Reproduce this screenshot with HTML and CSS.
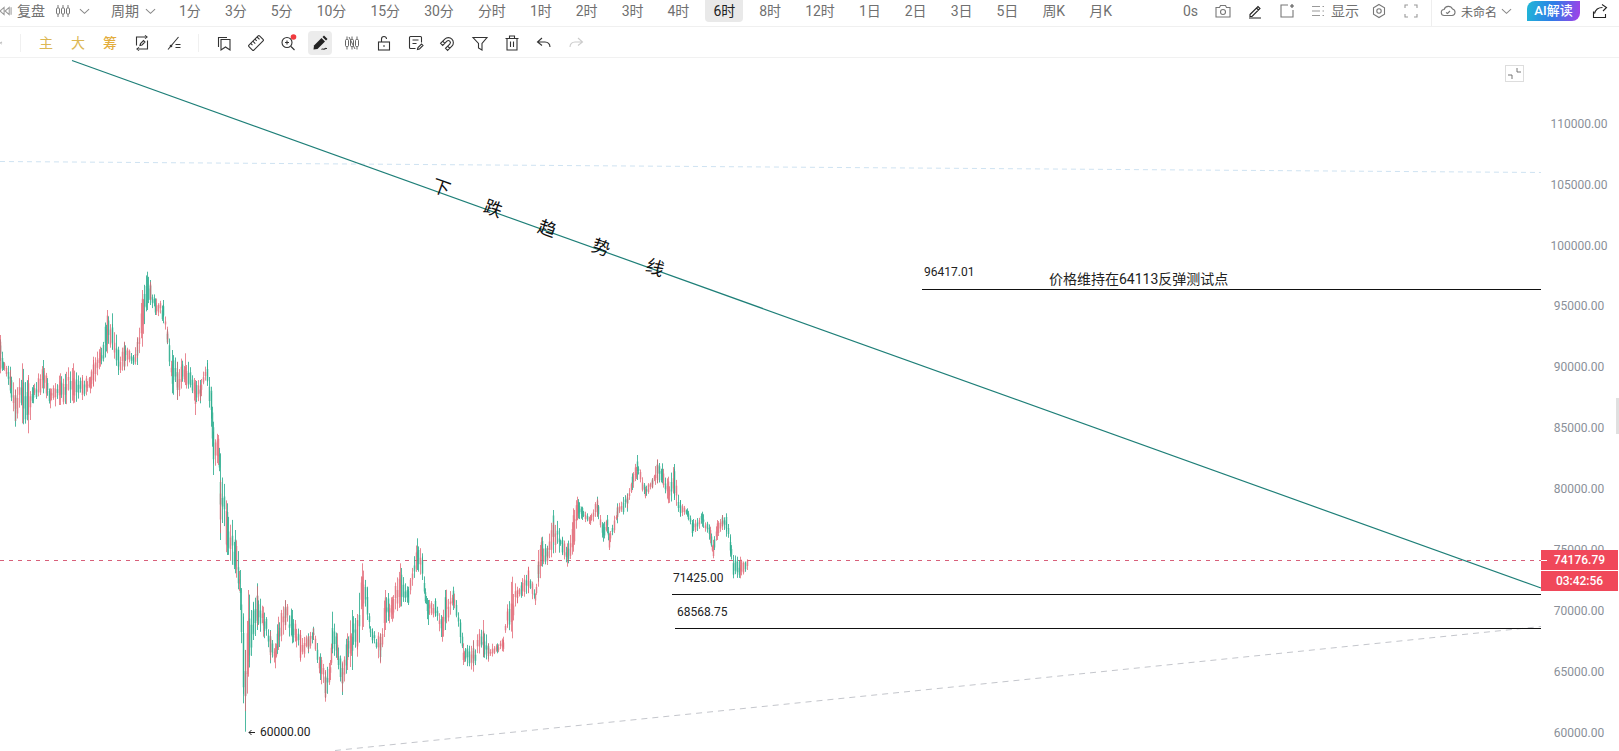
FILE: index.html
```html
<!DOCTYPE html>
<html lang="zh">
<head>
<meta charset="utf-8">
<title>BTC 6时</title>
<link rel="stylesheet" href="styles.css">
</head>
<body>
<div class="app">
  <header class="topbar">
    <svg class="ic replay" viewBox="0 0 14 16"><path d="M5.500 4 1 8l4.500 4zM11 4 6.500 8l4.500 4zM13 4v8"/></svg>
    <span class="label replay-label">复盘</span>
    <svg class="ic kline" viewBox="0 0 16 16"><path d="M3 2v3M3 11v3M8 2v3M8 11v3M13 2v3M13 11v3"/><rect x="1.500" y="5" width="3" height="6" rx="1"/><rect x="6.500" y="5" width="3" height="6" rx="1"/><rect x="11.500" y="5" width="3" height="6" rx="1"/></svg>
    <svg class="ic chev kline-chev" viewBox="0 0 12 12"><path d="M1 3.500 6 8l5-4.500"/></svg>
    <span class="label cycle">周期</span>
    <svg class="ic chev cycle-chev" viewBox="0 0 12 12"><path d="M1 3.500 6 8l5-4.500"/></svg>
    <nav class="periods">
      <span class="period">1分</span><span class="period">3分</span><span class="period">5分</span><span class="period">10分</span><span class="period">15分</span><span class="period">30分</span><span class="period">分时</span><span class="period">1时</span><span class="period">2时</span><span class="period">3时</span><span class="period">4时</span><span class="period active">6时</span><span class="period">8时</span><span class="period">12时</span><span class="period">1日</span><span class="period">2日</span><span class="period">3日</span><span class="period">5日</span><span class="period">周K</span><span class="period">月K</span>
    </nav>
    <div class="actions">
      <span class="label seconds">0s</span>
      <span class="cell"><svg class="ic" viewBox="0 0 16 16"><path d="M1 4.500h3.500l1-2h5l1 2H15v9.500H1z"/><circle cx="8" cy="9" r="2.500"/></svg></span>
      <span class="cell"><svg class="ic dark" viewBox="0 0 16 16"><path d="M3 11.500 11 3.500l2 2-8 8H3zM9.500 5l2 2M2 15h12"/></svg></span>
      <span class="cell"><svg class="ic" viewBox="0 0 16 16"><path d="M9 2H2v12h12V7"/><path class="dot" d="M13 1v4M11 3h4"/></svg></span>
      <span class="show-group">
        <svg class="ic light" viewBox="0 0 16 16"><path d="M2 3.500h8M2 8h8M2 12.500h8M12.500 3.500H14M12.500 8H14M12.500 12.500H14"/></svg>
        <span class="label">显示</span>
      </span>
      <span class="cell"><svg class="ic" viewBox="0 0 16 16"><path d="M8 1.500l5.500 3.200v6.600L8 14.500l-5.500-3.200V4.700z"/><circle cx="8" cy="8" r="2.200"/></svg></span>
      <span class="cell"><svg class="ic light" viewBox="0 0 16 16"><path d="M2 5V2h3M11 2h3v3M14 11v3h-3M5 14H2v-3"/></svg></span>
    </div>
    <div class="doc">
      <svg class="ic" viewBox="0 0 16 16"><path d="M4.500 12.500a3 3 0 0 1-.4-6A4.500 4.500 0 0 1 12.500 6a3.300 3.300 0 0 1-.5 6.500zM6 9.500l1.500 1L10 8"/></svg>
      <span class="doc-name">未命名</span>
      <svg class="ic chev" viewBox="0 0 12 12"><path d="M1 3.500 6 8l5-4.500"/></svg>
    </div>
    <button class="ai">AI解读</button>
    <svg class="ic dark share" viewBox="0 0 16 16"><path d="M1.500 8.500v6h12V11M2.500 10.500C3.500 6.500 6 4.500 10.500 4.500M10 1.500l4.500 3L11 8"/></svg>
  </header>

  <div class="toolbar">
    <span class="edge"><svg class="ic edge-mark" viewBox="0 0 4 16"><path d="M2 7 0 8l2 1"/></svg></span>
    <span class="cell gold">主</span>
    <span class="cell gold">大</span>
    <span class="cell gold strong">筹</span>
    <span class="cell"><svg class="ic tool" viewBox="0 0 16 16"><path d="M11 2H2.500v8.500M5 14h8.500V5.500M11 .5 13 2l-2 1.500M5 12.500 3 14l2 1.500"/><path d="M6 10.500l.5-2 3-3L11 7l-3 3z"/></svg></span>
    <span class="cell"><svg class="ic tool" viewBox="0 0 16 16"><path d="M2 14.500 12.500 2M9.500 9.500h5M9.500 12.500h5"/><circle cx="5" cy="11" r=".8"/></svg></span>
    <span class="rule"></span>
    <span class="cell"><svg class="ic tool" viewBox="0 0 16 16"><path d="M2.500 12V2.500H11"/><path d="M5 4.500h9V15l-4.500-3L5 15z"/></svg></span>
    <span class="cell"><svg class="ic tool" viewBox="0 0 16 16"><g transform="rotate(-45 8 8)"><rect x="0.500" y="4.500" width="15" height="7" rx="1"/><path d="M4 4.500V7M7 4.500V8M10 4.500V7M13 4.500V8"/></g></svg></span>
    <span class="cell"><svg class="ic tool" viewBox="0 0 16 16"><circle cx="7" cy="7.500" r="5"/><path d="M11 11.500l3.500 3.500M7 5.500v4M5 7.500h4"/><circle class="red-dot" cx="13.500" cy="2" r="2.800"/></svg></span>
    <span class="cell"><span class="active-tool"><svg class="ic tool" viewBox="0 0 16 16"><path class="fill" d="M2 10.500 9.500 3l3.500 3.500L5.500 14 1.500 14.500z"/><path class="fill" d="M10.500 2 12 .5 15.500 4 14 5.500z"/><path d="M9.500 14.500c1-1.500 2 .5 3-.5s1.500-.5 2.500-.5"/></svg></span></span>
    <span class="cell"><svg class="ic tool thin" viewBox="0 0 16 16"><path d="M3 1.500v3M3 11.500v3M8 1.500v3M8 11.500v3M13 1.500v3M13 11.500v3"/><rect x="1.500" y="4.500" width="3" height="7" rx="1"/><rect x="6.500" y="4.500" width="3" height="7" rx="1"/><rect x="11.500" y="4.500" width="3" height="7" rx="1"/><path d="M5 2l6 12"/></svg></span>
    <span class="cell"><svg class="ic tool" viewBox="0 0 16 16"><rect x="2.500" y="7" width="11" height="8"/><path d="M5.500 7V4a2.500 2.500 0 0 1 5 0M7 11h2"/></svg></span>
    <span class="cell"><svg class="ic tool" viewBox="0 0 16 16"><path d="M13.500 7.500V2.500a1 1 0 0 0-1-1h-10a1 1 0 0 0-1 1v10a1 1 0 0 0 1 1h5M4.500 5h6M4.500 8.500h4"/><path d="M9.500 14.500l.5-2 3.500-3.500 1.500 1.500-3.500 3.500z"/></svg></span>
    <span class="cell"><svg class="ic tool" viewBox="0 0 16 16"><g transform="rotate(-135 8 8)"><path d="M3 2.500V8.500a5 5 0 0 0 10 0V2.500h-3v6a2 2 0 0 1-4 0v-6zM3 5.500h3M10 5.500h3"/></g></svg></span>
    <span class="cell"><svg class="ic tool" viewBox="0 0 16 16"><path d="M1 2.500h14L10 8.500V15L6.500 13V8.500z"/></svg></span>
    <span class="cell"><svg class="ic tool" viewBox="0 0 16 16"><path d="M1.500 3.500h13M5.500 3.500V1h5v2.500M3 3.500v11.500h10V3.500M6.500 6.500v5.500M9.500 6.500v5.500"/></svg></span>
    <span class="cell"><svg class="ic tool" viewBox="0 0 16 16"><path d="M6 3 1.500 7 6 10.500M2 7h7c3 0 5 2 5 5"/></svg></span>
    <span class="cell"><svg class="ic tool disabled" viewBox="0 0 16 16"><path d="M10 3l4.500 4L10 10.500M14 7H7c-3 0-5 2-5 5"/></svg></span>
  </div>

  <main class="chart">
    <svg class="plot" viewBox="0 58 1619 693">
      <line class="dash-blue" x1="0" y1="161.500" x2="1541" y2="172.500"/>
      <line class="dash-gray" x1="335" y1="750.500" x2="1541" y2="626.500"/>
      <line class="dash-price" x1="0" y1="560.500" x2="1541" y2="560.500"/>
      <g id="candles"></g>
      <line class="trend" x1="72" y1="60.500" x2="1541" y2="588"/>
      <line class="level" x1="922" y1="289.500" x2="1541" y2="289.500"/>
      <line class="level" x1="672" y1="594.500" x2="1541" y2="594.500"/>
      <line class="level" x1="675" y1="628.500" x2="1541" y2="628.500"/>

      <text class="on-line" transform="translate(441 188) rotate(20)" y="6">下</text>
      <text class="on-line" transform="translate(493 209) rotate(20)" y="6">跌</text>
      <text class="on-line" transform="translate(547 229) rotate(20)" y="6">趋</text>
      <text class="on-line" transform="translate(601 248) rotate(20)" y="6">势</text>
      <text class="on-line" transform="translate(655 268) rotate(20)" y="6">线</text>

      <text class="mark" x="924" y="276">96417.01</text>
      <text class="note" x="1049" y="284">价格维持在64113反弹测试点</text>
      <text class="mark" x="673" y="582">71425.00</text>
      <text class="mark" x="677" y="616">68568.75</text>
      <path class="low-arrow" d="M255 732.500h-6M251.500 730l-2.500 2.500 2.500 2.500"/>
      <text class="mark" x="260" y="736">60000.00</text>

      <text class="axis" x="1579" y="127.500">110000.00</text>
      <text class="axis" x="1579" y="188.500">105000.00</text>
      <text class="axis" x="1579" y="249.500">100000.00</text>
      <text class="axis" x="1579" y="310">95000.00</text>
      <text class="axis" x="1579" y="371">90000.00</text>
      <text class="axis" x="1579" y="432">85000.00</text>
      <text class="axis" x="1579" y="493">80000.00</text>
      <text class="axis" x="1579" y="554">75000.00</text>
      <text class="axis" x="1579" y="615">70000.00</text>
      <text class="axis" x="1579" y="676">65000.00</text>
      <text class="axis" x="1579" y="736.500">60000.00</text>
    </svg>
    <span class="compress"><svg class="ic tool" viewBox="0 0 17 15"><path d="M11 2v4h4M2 9h4v4"/></svg></span>
    <span class="tag price">74176.79</span>
    <span class="tag timer">03:42:56</span>
    <span class="handle"></span>
  </main>
</div>
<script src="chart.js"></script>
</body>
</html>
```

FILE: styles.css
```css
* { box-sizing: border-box; }
html, body { margin: 0; height: 100%; background: #fff; overflow: hidden; }
body { font-family: Roboto, "Noto Sans CJK SC", sans-serif; color: #707070; }

.app { display: flex; flex-direction: column; width: 100%; height: 100vh; }

.ic { display: block; width: 16px; height: 16px; flex: none; fill: none; stroke: #777; stroke-width: 1.1; overflow: visible; }
.ic.dark { stroke: #222; }
.ic.light { stroke: #999; }
.ic.tool { stroke: #333; }
.ic.thin { stroke-width: .9; stroke: #555; }
.ic.disabled { stroke: #ccc; }
.ic .fill { fill: #222; stroke: none; }
.ic .dot { stroke: #555; }
.ic .red-dot { fill: #f03a3f; stroke: none; }

.topbar { display: flex; align-items: flex-start; height: 27px; border-bottom: 1px solid #f0f0f0; }
.topbar > .ic, .topbar > .label { margin-top: 3px; }
.label { font-size: 14px; line-height: 16px; color: #707070; white-space: nowrap; }
.replay { width: 13px; margin-left: -1px; stroke: #999; }
.replay-label { margin-left: 5px; }
.kline { margin-left: 10px; stroke: #777; stroke-width: 1; }
.chev { width: 11px; height: 11px; }
.topbar > .chev { margin-top: 6px; stroke: #888; }
.kline-chev { margin-left: 8px; }
.cycle { margin-left: 21px; }
.cycle-chev { margin-left: 6px; }

.periods { display: flex; margin-left: 11px; }
.period { padding: 0 12px; height: 22px; line-height: 22px; font-size: 14px; color: #707070; white-space: nowrap; border-radius: 0 0 4px 4px; }
.period.active { padding: 0 8px; margin: 0 4px; background: #e9e9e9; color: #222; }

.actions { display: flex; align-items: center; height: 22px; margin-left: auto; margin-right: 4px; }
.seconds { margin-right: 9px; }
.cell { display: flex; align-items: center; justify-content: center; width: 32px; flex: none; }
.show-group { display: flex; align-items: center; gap: 5px; width: 60px; padding-left: 7px; }

.doc { display: flex; align-items: center; gap: 5px; width: 96px; height: 26px; padding: 0 0 4px 8px; border-left: 1px solid #eee; }
.doc-name { font-size: 12px; color: #666; white-space: nowrap; }
.doc .chev { margin-left: -1px; stroke: #888; }

.ai { width: 53px; height: 20px; margin: 1px 0 0; padding: 0; border: 0; border-radius: 8px 0 8px 0; background: linear-gradient(100deg, #1fb8d6 0%, #2f7be8 50%, #a53ee8 100%); color: #fff; font: 500 13px/20px Roboto, "Noto Sans CJK SC", sans-serif; }
.topbar > .share { margin: 3px 11px 0 12px; }

.toolbar { display: flex; align-items: center; height: 31px; border-bottom: 1px solid #f1f1f1; padding-top: 1px; }
.edge { display: flex; align-items: center; width: 21px; height: 18px; margin-right: 9px; border-right: 1px solid #f0f0f0; }
.edge-mark { width: 4px; stroke: #bbb; }
.gold { font-size: 14px; line-height: 24px; color: #dcb753; }
.gold.strong { color: #e3ad3d; font-weight: 500; }
.rule { width: 1px; height: 18px; margin: 0 9px 0 8px; background: #f0f0f0; }
.active-tool { display: flex; align-items: center; justify-content: center; width: 24px; height: 24px; border-radius: 4px; background: #ececec; }

.chart { position: relative; flex: 1; min-height: 0; }
.plot { display: block; width: 100%; height: 100%; }

.dash-blue { stroke: #cfe3f2; stroke-dasharray: 5 4; }
.dash-gray { stroke: #c4c6cc; stroke-dasharray: 6 5; }
.dash-price { stroke: #d8607a; stroke-dasharray: 4 5; }
.trend { stroke: #1e7f78; stroke-width: 1.2; }
.level { stroke: #111; stroke-width: 1; }
.low-arrow { fill: none; stroke: #222; stroke-width: 1; }

.wick-up { fill: none; stroke: #e2606f; stroke-width: 1; opacity: .75; }
.wick-down { fill: none; stroke: #2fae90; stroke-width: 1; opacity: .85; }
.body-up { fill: none; stroke: #e0989c; stroke-width: 2; opacity: .55; }
.body-down { fill: none; stroke: #74c9b0; stroke-width: 2; opacity: .65; }

.on-line { font-family: "Noto Sans CJK SC", sans-serif; font-size: 18px; fill: #111; text-anchor: middle; }
.mark { font-family: Roboto, sans-serif; font-size: 12px; fill: #222; }
.note { font-family: Roboto, "Noto Sans CJK SC", sans-serif; font-size: 14px; fill: #222; }
.axis { font-family: Roboto, sans-serif; font-size: 12px; fill: #8a9099; text-anchor: middle; }

.compress { position: absolute; top: 7px; left: 1505px; display: flex; align-items: center; justify-content: center; width: 19px; height: 17px; border: 1px solid #ddd; }
.compress .ic { width: 17px; height: 15px; stroke: #666; stroke-width: .9; }
.tag { position: absolute; left: 1541px; width: 77px; height: 20px; background: #f0485a; color: #fff; font-size: 12px; font-weight: 500; line-height: 20px; text-align: center; }
.price { top: 492px; }
.price::before { content: ""; position: absolute; left: 0; top: 10px; width: 6px; height: 1px; background: #fff; }
.timer { top: 513px; }
.handle { position: absolute; top: 340px; right: 0; width: 3px; height: 36px; background: #e0e0e0; }
```

FILE: chart.js
```js
// Price envelope read from the chart: [x, top, bottom] in three coordinate frames.
(function () {
  var frames = [
    { ox: 0, oy: 260, pts: [[0,225,340],[10,305,330],[30,320,400],[45,390,500],[65,310,490],[85,345,520],[100,375,430],[130,300,400],[150,385,445],[180,340,435],[220,310,430],[245,345,420],[270,350,400],[280,290,380],[300,260,320],[320,150,280],[335,160,270],[355,260,345],[372,245,330],[400,285,315],[410,235,315],[425,90,260],[440,35,150],[450,60,135],[465,115,165],[490,120,190],[500,200,250],[515,270,400],[530,305,420],[555,280,375],[585,360,465],[600,360,430],[620,300,365],[632,380,500],[636,440,560],[640,515,645],[655,525,615],[661,580,840],[680,730,885]] },
    { ox: 220, oy: 530, pts: [[45,0,130],[60,120,240],[70,250,520],[75,360,605],[85,180,440],[100,220,330],[110,160,300],[130,230,320],[150,300,400],[165,340,415],[175,260,360],[195,210,300],[215,240,340],[240,300,395],[265,310,370],[280,290,330],[300,370,450],[315,420,515],[330,390,450],[335,245,370],[350,310,390],[365,400,495],[380,310,420],[395,240,420],[410,270,380],[425,100,300],[440,170,270],[455,295,340],[480,310,400],[495,180,300],[515,200,275],[540,100,230],[565,170,225],[590,25,120],[605,70,150],[615,175,220],[625,210,285],[645,205,260],[665,260,335],[675,180,300],[700,170,240],[720,270,340],[730,340,405],[760,330,425],[790,270,380],[805,340,395],[830,340,370],[850,320,365],[860,235,290],[875,140,325],[890,170,220],[925,110,190],[945,190,225],[955,60,170]] },
    { ox: 520, oy: 440, pts: [[65,290,380],[80,320,375],[100,210,340],[125,290,340],[140,310,380],[160,205,335],[170,170,240],[185,200,240],[210,225,255],[230,170,230],[250,250,305],[260,225,280],[268,280,330],[290,190,250],[320,160,215],[335,100,150],[352,45,120],[375,140,175],[395,115,145],[412,58,130],[425,70,130],[445,110,190],[462,72,180],[480,180,230],[500,205,230],[515,240,290],[545,215,260],[570,260,310],[578,300,355],[590,240,300],[605,225,270],[618,220,290],[630,290,350],[640,345,415],[660,350,415],[680,358,390]] }
  ];

  var env = [];
  frames.forEach(function (f) {
    f.pts.forEach(function (p) {
      env.push([f.ox + p[0] / 3, f.oy + p[1] / 3, f.oy + p[2] / 3]);
    });
  });

  var seed = 20240611;
  function rnd() {
    seed = (seed * 1664525 + 1013904223) % 4294967296;
    return seed / 4294967296;
  }

  var d = { wickUp: "", wickDown: "", bodyUp: "", bodyDown: "" };

  function candle(x, hi, lo, down) {
    var span = lo - hi;
    var b1 = hi + span * (0.1 + rnd() * 0.35);
    var b2 = lo - span * (0.1 + rnd() * 0.35);
    var px = Math.round(x) + 0.5;
    var wick = "M" + px + " " + hi.toFixed(1) + "V" + lo.toFixed(1);
    var body = "M" + px + " " + b1.toFixed(1) + "V" + b2.toFixed(1);
    if (down) { d.wickDown += wick; d.bodyDown += body; }
    else { d.wickUp += wick; d.bodyUp += body; }
  }

  var STEP = 1.9;
  var seg = 0;
  for (var x = 0; x <= env[env.length - 1][0]; x += STEP) {
    while (seg < env.length - 2 && env[seg + 1][0] < x) seg++;
    var a = env[seg], b = env[seg + 1];
    var t = Math.min(1, (x - a[0]) / (b[0] - a[0]));
    var upper = a[1] + (b[1] - a[1]) * t;
    var lower = a[2] + (b[2] - a[2]) * t;
    var h = lower - upper;
    var falling = (b[1] + b[2]) - (a[1] + a[2]) > 0;
    var r1 = rnd(), r2 = rnd();
    candle(x, upper + r1 * r1 * h * 0.4, lower - r2 * r2 * h * 0.4, rnd() < (falling ? 0.72 : 0.32));
  }

  // Every traced extreme gets a candle of its own, so that the spikes reach their full height.
  env.forEach(function (p, i) {
    var next = env[i + 1] || p, prev = env[i - 1] || p;
    var falling = (next[1] + next[2]) - (prev[1] + prev[2]) > 0;
    candle(p[0], p[1], p[2], rnd() < (falling ? 0.72 : 0.32));
  });

  var group = document.getElementById("candles");
  [["body-down", d.bodyDown], ["body-up", d.bodyUp], ["wick-down", d.wickDown], ["wick-up", d.wickUp]].forEach(function (item) {
    var path = document.createElementNS("http://www.w3.org/2000/svg", "path");
    path.setAttribute("class", item[0]);
    path.setAttribute("d", item[1]);
    group.appendChild(path);
  });
})();
```
